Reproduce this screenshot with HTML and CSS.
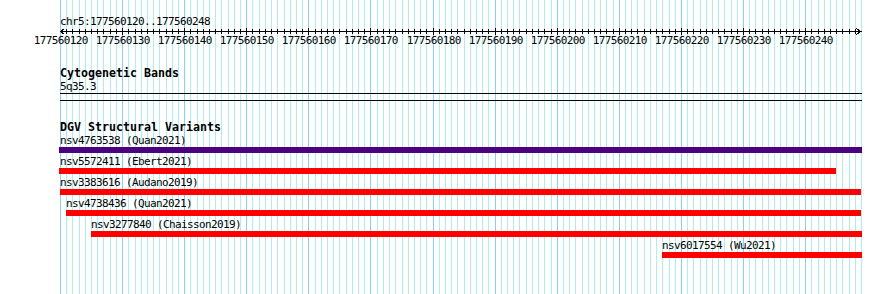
FILE: index.html
```html
<!DOCTYPE html>
<html>
<head>
<meta charset="utf-8">
<title>DGV track view</title>
<link rel="stylesheet" href="styles.css">
</head>
<body>
<div class="view">
  <svg class="grid" id="grid" width="890" height="294" shape-rendering="crispEdges"></svg>
  <div class="content">
    <div class="ruler-title">chr5:177560120..177560248</div>
    <svg class="axis" id="axis" width="890" height="20" shape-rendering="crispEdges">
      <rect class="axis-line" x="60" y="4" width="802" height="1"></rect>
      <path class="arrow" d="M64.5 1.5 L60.5 4.5 L64.5 7.5"></path>
      <path class="arrow" d="M856.5 1.5 L860.5 4.5 L856.5 7.5"></path>
    </svg>

    <section class="track cyto">
      <div class="track-title">Cytogenetic Bands</div>
      <div class="label band-label">5q35.3</div>
      <div class="band-rule"></div>
    </section>

    <section class="track dgv">
      <div class="track-title">DGV Structural Variants</div>
      <div class="feature" style="margin-left:60px">
        <div class="label">nsv4763538 (Quan2021)</div>
        <div class="bar indigo" style="margin-left:-1px;width:803px"></div>
      </div>
      <div class="feature" style="margin-left:60px">
        <div class="label">nsv5572411 (Ebert2021)</div>
        <div class="bar" style="margin-left:-1px;width:777px"></div>
      </div>
      <div class="feature" style="margin-left:60px">
        <div class="label">nsv3383616 (Audano2019)</div>
        <div class="bar" style="width:801px"></div>
      </div>
      <div class="feature" style="margin-left:66px">
        <div class="label">nsv4738436 (Quan2021)</div>
        <div class="bar" style="width:795px"></div>
      </div>
      <div class="feature" style="margin-left:91px">
        <div class="label">nsv3277840 (Chaisson2019)</div>
        <div class="bar" style="width:771px"></div>
      </div>
      <div class="feature" style="margin-left:662px">
        <div class="label">nsv6017554 (Wu2021)</div>
        <div class="bar" style="width:200px"></div>
      </div>
    </section>
  </div>
</div>
<script src="script.js"></script>
</body>
</html>
```
FILE: styles.css
```css
html, body {
  margin: 0;
  background: #ffffff;
}

.view {
  position: relative;
  width: 890px;
  height: 294px;
  overflow: hidden;
  font-family: "DejaVu Sans Mono", "Liberation Mono", monospace;
  font-size: 11px;
  letter-spacing: -0.62px;
  color: #000;
}

.grid {
  position: absolute;
  left: 0;
  top: 0;
}

.grid .minor { fill: #afeeee; }
.grid .major { fill: #87cefa; }

.content {
  position: relative;
}

.ruler-title {
  padding: 16px 0 0 60px;
  line-height: 11px;
  height: 11px;
  white-space: pre;
}

.axis {
  display: block;
}

.axis rect { fill: #000; }
.axis .arrow {
  fill: none;
  stroke: #000;
  stroke-width: 1;
}
.axis text {
  font-family: "DejaVu Sans Mono", "Liberation Mono", monospace;
  font-size: 11px;
  letter-spacing: -0.62px;
  fill: #000;
}

.track {
  display: flex;
  flex-direction: column;
  align-items: flex-start;
}

.track-title {
  margin: 22px 0 0 60px;
  font-weight: bold;
  font-size: 11.63px;
  letter-spacing: 0;
  line-height: 11px;
  height: 11px;
  white-space: pre;
}

.cyto .track-title {
  margin-top: 21px;
}

.dgv .track-title {
  margin-top: 21px;
  margin-bottom: 2px;
}

.label {
  line-height: 11px;
  height: 11px;
  white-space: pre;
}

.band-label {
  margin: 2px 0 0 60px;
}

.band-rule {
  margin: 1px 0 0 60px;
  width: 802px;
  height: 8px;
  box-sizing: border-box;
  border-top: 1px solid #000;
  border-bottom: 1px solid #000;
}

.feature {
  display: flex;
  flex-direction: column;
  align-items: flex-start;
  margin-bottom: 3px;
}

.bar {
  height: 6px;
  margin-top: 1px;
  background: #ff0000;
}

.bar.indigo {
  background: #4b0082;
}
```
FILE: script.js
```js
(function () {
  var NS = 'http://www.w3.org/2000/svg';
  var grid = document.getElementById('grid');
  var axis = document.getElementById('axis');
  var x0 = 60, bpCount = 129, start = 177560120;
  var scale = 801 / bpCount;

  function rect(parent, x, y, w, h, cls) {
    var r = document.createElementNS(NS, 'rect');
    r.setAttribute('x', x);
    r.setAttribute('y', y);
    r.setAttribute('width', w);
    r.setAttribute('height', h);
    if (cls) r.setAttribute('class', cls);
    parent.appendChild(r);
  }

  for (var i = 0; i <= bpCount; i++) {
    var x = x0 + Math.round(i * scale);
    var major = (i % 10 === 0);
    rect(grid, x, 0, 1, 294, major ? 'major' : 'minor');
    if (i > 0 && i < bpCount) {
      if (major) rect(axis, x, 1, 1, 7);
      else rect(axis, x, 2, 1, 5);
    }
    if (major && i < bpCount) {
      var t = document.createElementNS(NS, 'text');
      t.setAttribute('x', x + 0.8);
      t.setAttribute('y', 17);
      t.setAttribute('text-anchor', 'middle');
      t.textContent = String(start + i);
      axis.appendChild(t);
    }
  }
})();
```
